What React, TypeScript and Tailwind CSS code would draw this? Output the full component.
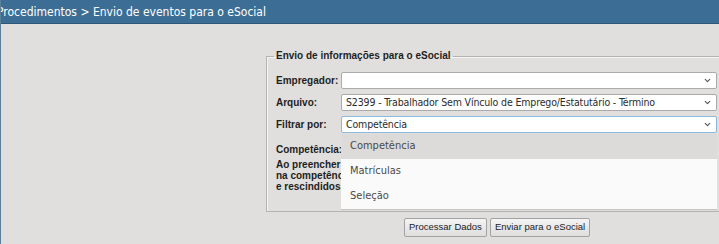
import { ChevronDown } from "lucide-react";

type SelectProps = {
  value: string;
  focused?: boolean;
};

function Select({ value, focused }: SelectProps) {
  return (
    <div
      className={`flex h-[17px] w-[376px] items-center justify-between rounded-[2px] border bg-white pl-[4px] pr-[4px] ${
        focused ? "border-[#8cb8dc]" : "border-[#ababab]"
      }`}
    >
      <span className="truncate font-['DejaVu_Sans_Condensed','DejaVu_Sans',sans-serif] text-[10.5px] font-normal leading-none tracking-[-0.15px] text-[#2b2b2b]">
        {value}
      </span>
      <ChevronDown className="h-[9px] w-[9px] shrink-0 text-[#555]" strokeWidth={3} />
    </div>
  );
}

export default function App() {
  const options = ["Competência", "Matrículas", "Seleção"];

  return (
    <div className="h-[244px] w-[719px] overflow-hidden border-l border-[#5b7f98] bg-[#e0dfdd] font-['Liberation_Sans',Arial,sans-serif]">
      {/* Breadcrumb header */}
      <div className="-ml-[4px] flex h-[24px] items-center border-b border-[#2e5676] bg-[#3c6e95]">
        <span className="whitespace-nowrap font-['DejaVu_Sans_Condensed','DejaVu_Sans',sans-serif] text-[12px] text-white">
          Procedimentos &gt; Envio de eventos para o eSocial
        </span>
      </div>

      <div className="pl-[265px] pt-[26px]">
        <fieldset className="w-[460px] border border-[#b3b3b3] pb-[19px] pl-[9px] pr-0 pt-[10px] shadow-[inset_1px_1px_0_#f4f4f4]">
          <legend className="-ml-[2px] px-[2px] text-[10px] font-bold leading-[12px] text-[#1e1e1e]">
            Envio de informações para o eSocial
          </legend>

          <div className="flex flex-col gap-[5px] text-[10px] font-bold text-[#1e1e1e]">
            <div className="flex items-center">
              <label className="w-[65px]">Empregador:</label>
              <Select value="" />
            </div>
            <div className="flex items-center">
              <label className="w-[65px]">Arquivo:</label>
              <Select value="S2399 - Trabalhador Sem Vínculo de Emprego/Estatutário - Término" />
            </div>
            <div className="flex items-center">
              <label className="w-[65px]">Filtrar por:</label>
              <div className="relative z-10">
                <Select value="Competência" focused />
                {/* open dropdown list */}
                <ul className="absolute left-0 top-full mt-[1px] w-[376px] border-b border-[#c4c4c4] bg-[#fafafa] font-['DejaVu_Sans_Condensed','DejaVu_Sans',sans-serif] text-[11px] font-normal text-[#4a4a4a]">
                  {options.map((opt, idx) => (
                    <li
                      key={opt}
                      className={`flex h-[25px] items-center pl-[9px] ${
                        idx === 0 ? "bg-[#dcdbd9]" : ""
                      }`}
                    >
                      {opt}
                    </li>
                  ))}
                </ul>
              </div>
            </div>
            <div className="mt-[3px] flex items-center">
              <label className="w-[65px]">Competência:</label>
              <input className="h-[17px] w-[60px] border border-[#ababab] bg-white" />
            </div>
          </div>

          <p className="mt-[1px] whitespace-nowrap text-[10px] font-bold leading-[11px] text-[#1e1e1e]">
            Ao preencher a competência, serão gerados os eventos dos trabalhadores
            <br />
            na competência informada, bem como dos trabalhadores desligados
            <br />
            e rescindidos no mesmo período.
          </p>
        </fieldset>

        <div className="mt-[6px] flex gap-[3px] pl-[138px]">
          <button className="h-[19px] rounded-[2px] border border-[#a3a3a3] bg-gradient-to-b from-[#f4f4f4] to-[#dedede] px-[4px] text-[9.5px] text-[#222]">
            Processar Dados
          </button>
          <button className="h-[19px] rounded-[2px] border border-[#a3a3a3] bg-gradient-to-b from-[#f4f4f4] to-[#dedede] px-[4px] text-[9.5px] text-[#222]">
            Enviar para o eSocial
          </button>
        </div>
      </div>
    </div>
  );
}
